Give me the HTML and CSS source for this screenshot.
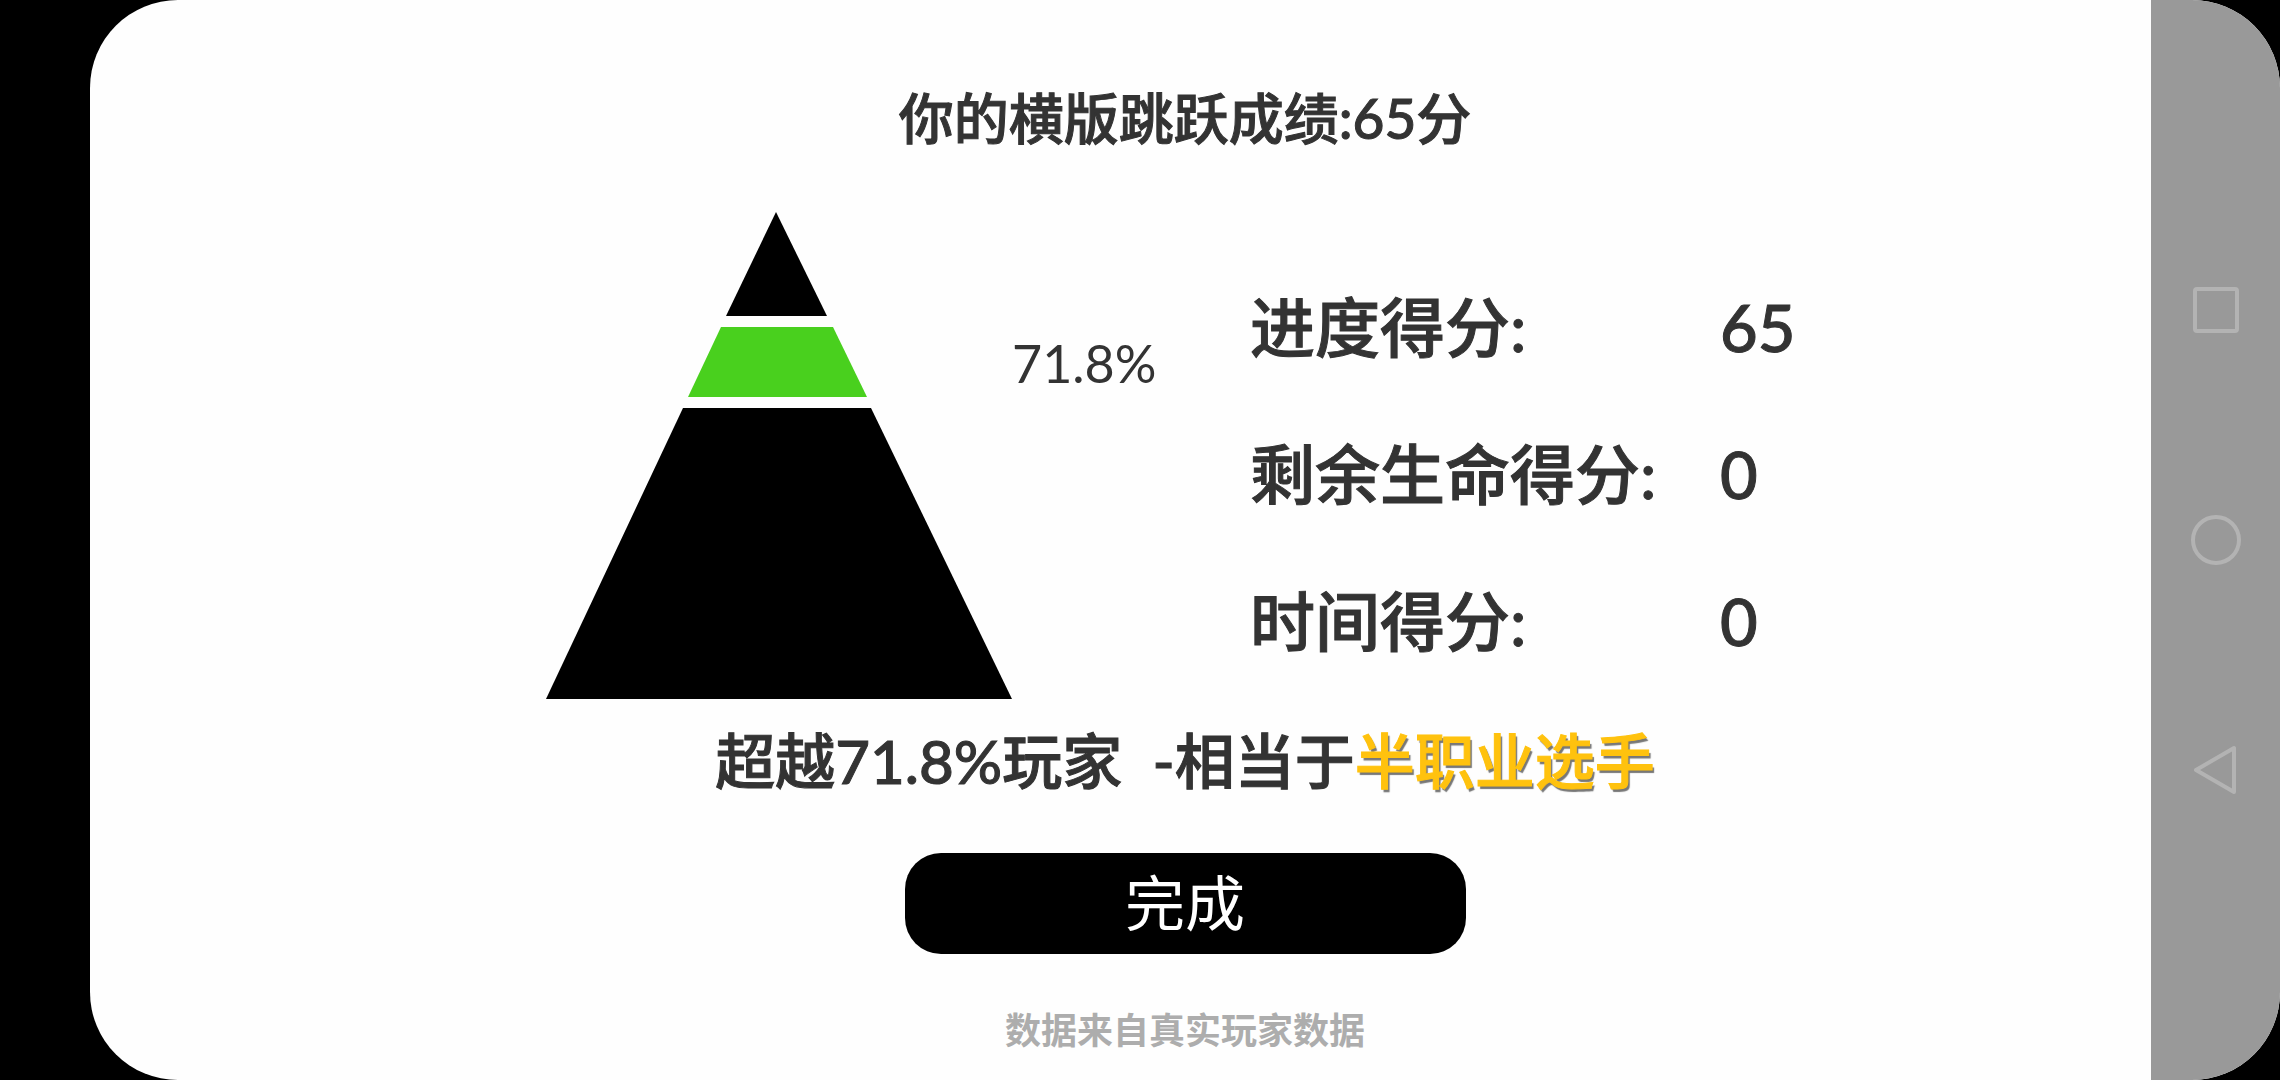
FILE: index.html
```html
<!DOCTYPE html>
<html lang="zh-CN">
<head>
  <meta charset="UTF-8">
  <title>横版跳跃成绩</title>
  <meta name="viewport" content="width=device-width, initial-scale=1.0"/>
  <link rel="stylesheet" href="styles.css">
</head>
<body>

<div class="screen">
  <main class="result">
    <h1>你的横版跳跃成绩:65分</h1>

    <div class="scores">
      <svg class="pyramid" viewBox="0 0 466 487" aria-hidden="true">
        <path d="M230 0L281 104H180Z"/>
        <path class="current" d="M175 115H287L321 185H142Z"/>
        <path d="M137 196H325L466 487H0Z"/>
      </svg>
      <div class="percent">71.8%</div>
      <table>
        <tr><th scope="row">进度得分:</th><td>65</td></tr>
        <tr><th scope="row">剩余生命得分:</th><td>0</td></tr>
        <tr><th scope="row">时间得分:</th><td>0</td></tr>
      </table>
    </div>

    <p class="summary">超越71.8%玩家 &nbsp;-相当于<strong>半职业选手</strong></p>
    <button type="button" class="done">完成</button>
    <p class="source">数据来自真实玩家数据</p>
  </main>

  <!-- system navigation keys, drawn over the page -->
  <nav class="keys">
    <button type="button" aria-label="最近任务">
      <svg viewBox="0 0 50 50"><rect x="4" y="4" width="42" height="42" rx="2"/></svg>
    </button>
    <button type="button" aria-label="主屏幕">
      <svg viewBox="0 0 50 50"><circle cx="25" cy="25" r="23"/></svg>
    </button>
    <button type="button" aria-label="返回">
      <svg viewBox="0 0 50 50"><path d="M5 25L43 3V47Z"/></svg>
    </button>
  </nav>
</div>

</body>
</html>
```
FILE: styles.css
```css
* {
  box-sizing: border-box;
}
body {
  font-family: Lato, 'Noto Sans CJK SC', sans-serif;
  margin: 0;
  padding-left: 90px;
  background-color: #000;
  color: #333;
}
.screen {
  position: relative;
  min-height: 100vh;
  border-radius: 88px;
  overflow: hidden;
  background-color: #fefefe;
}
.result {
  display: flex;
  flex-direction: column;
  align-items: center;
  padding-top: 78px;
}
h1, table, .summary {
  font-weight: 500;
  -webkit-text-stroke: 1px;
}
h1 {
  margin: 0;
  font-size: 55px;
  line-height: 80px;
}
.scores {
  display: flex;
  align-items: flex-start;
  width: 100%;
  max-width: 1278px;
  margin-top: 54px;
}
.pyramid {
  flex: none;
  width: 466px;
  height: 487px;
}
.pyramid .current {
  fill: #49d01e;
}
.percent {
  flex: none;
  width: 238px;
  padding-top: 111px;
  font-size: 52px;
  line-height: 80px;
}
table {
  flex: 1;
  margin-top: 41px;
  border-collapse: collapse;
  table-layout: fixed;
  font-size: 65px;
  line-height: 80px;
}
tr {
  height: 147px;
}
th, td {
  padding: 0;
  font-weight: 500;
  text-align: left;
}
th {
  width: 470px;
}
.summary {
  margin: 22px 0 0;
  font-size: 60px;
  line-height: 80px;
}
.summary strong {
  color: #ffc20e;
  font-weight: 500;
  text-shadow: 2px 3px 1px #777;
}
.done {
  width: 561px;
  height: 101px;
  margin-top: 52px;
  padding: 0 0 2px;
  border: none;
  border-radius: 36px;
  background-color: #000;
  color: white;
  font-family: inherit;
  font-size: 60px;
  line-height: 80px;
  cursor: pointer;
}
.source {
  margin: 56px 0 0;
  color: #adadad;
  font-size: 36px;
  line-height: 40px;
  font-weight: 700;
}
.keys {
  position: absolute;
  top: 0;
  right: 0;
  bottom: 0;
  width: 129px;
  display: flex;
  flex-direction: column;
  align-items: center;
  justify-content: center;
  gap: 180px;
  background-color: #999;
}
.keys button {
  padding: 0;
  border: none;
  background: none;
  cursor: pointer;
}
.keys svg {
  display: block;
  width: 50px;
  height: 50px;
  fill: none;
  stroke: #b3b3b3;
  stroke-width: 4;
  stroke-linejoin: round;
}
```
